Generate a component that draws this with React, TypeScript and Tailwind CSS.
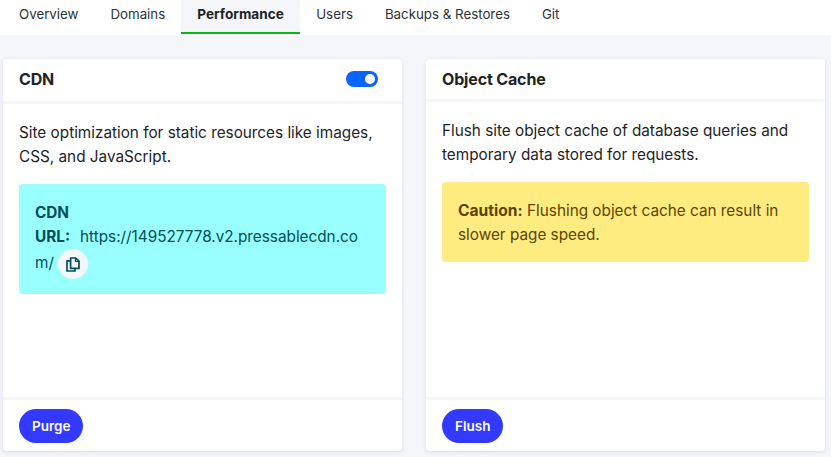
const tabs = ["Overview", "Domains", "Performance", "Users", "Backups & Restores", "Git"];

function CopyIcon() {
  return (
    <svg width="14" height="15" viewBox="0 0 14 15" fill="none" stroke="#004f58" strokeWidth="1.7" strokeLinejoin="round" aria-hidden>
      <path d="M4.6 1h5l3.4 3.2V11.4H4.6z" />
      <path d="M4.6 3.8H1V14h8v-2.6" />
      <path d="M9.4 1v3.4H13" strokeWidth="1.2" />
    </svg>
  );
}

function Card({
  title,
  action,
  button,
  children,
}: {
  title: string;
  action?: React.ReactNode;
  button: string;
  children: React.ReactNode;
}) {
  return (
    <section className="flex h-[392px] flex-col rounded-[4px] bg-white shadow-[0_1px_4px_rgba(30,40,70,0.12)]">
      <header className="flex items-start justify-between border-b-[3px] border-[#f5f6fa] pl-4 pr-6">
        <h2 className="py-2 text-base leading-6 font-bold tracking-[-0.15px] text-[#1d2327]">{title}</h2>
        {action}
      </header>
      <div className="flex-1 px-4 pt-[17px] text-[15.3px] leading-6 text-[#1d2327]">{children}</div>
      <footer className="border-t-[3px] border-[#f5f6fa] px-4 pt-[9px] pb-2">
        <button className="h-[34px] rounded-full bg-[#3339ff] px-[13px] text-[13.5px] font-semibold text-white">{button}</button>
      </footer>
    </section>
  );
}

export default function App() {
  return (
    <div className="min-h-[457px] bg-[#f5f6fa] font-['Inter',sans-serif] text-base leading-6">
      <nav className="flex h-[35px] bg-white pl-[3px] text-[#2c3338]">
        {tabs.map((t) => (
          <a
            key={t}
            className={
              t === "Performance"
                ? "h-[34px] w-[119px] border-b-2 border-[#00ba13] bg-[#f5f6fa] pl-4 pt-[2px] text-[13.6px] leading-6 font-bold text-[#1d2327]"
                : "px-4 pt-[2px] text-[13.3px] leading-6"
            }
          >
            {t}
          </a>
        ))}
      </nav>
      <main className="ml-[3px] grid w-[822px] grid-cols-2 gap-6 pt-6">
        <Card
          title="CDN"
          button="Purge"
          action={
            <span className="mt-3 mb-[14px] flex h-4 w-8 items-center justify-end rounded-full bg-[#0a64ff] pr-[3px]">
              <span className="h-[10px] w-[10px] rounded-full bg-white" />
            </span>
          }
        >
          <p>Site optimization for static resources like images, CSS, and JavaScript.</p>
          <div className="mt-[15px] h-[110px] rounded-[4px] bg-[#99ffff] pt-[17px] pr-[24px] pb-[15px] pl-4 text-[#004f58] [overflow-wrap:anywhere]">
            <strong className="font-bold">CDN URL:</strong>
            <span className="ml-[10px]">https://149527778.v2.pressablecdn.com/</span>
            <span className="ml-[4px] inline-flex h-[30px] w-[30px] items-center justify-center rounded-full bg-[#f5f6fa] align-middle">
              <CopyIcon />
            </span>
          </div>
        </Card>
        <Card title="Object Cache" button="Flush">
          <p>Flush site object cache of database queries and temporary data stored for requests.</p>
          <div className="mt-[15px] rounded-[4px] bg-[#ffec80] px-4 pt-[17px] pb-[15px] text-[#5c4400]">
            <strong className="text-[15.6px] font-bold">Caution:</strong> Flushing object cache can result in slower page speed.
          </div>
        </Card>
      </main>
    </div>
  );
}
